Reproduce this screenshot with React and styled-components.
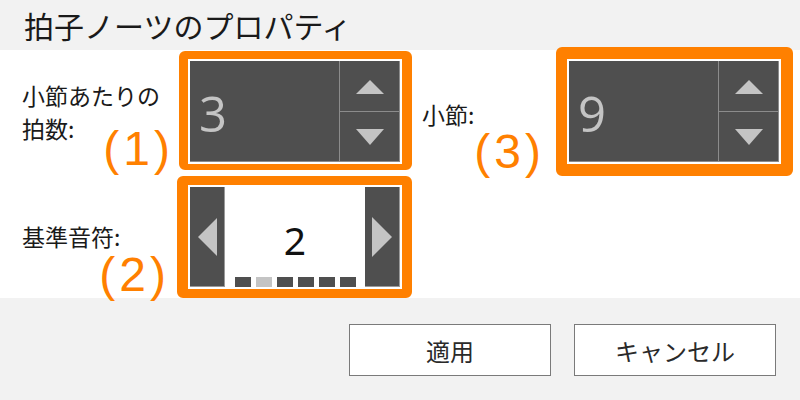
import React from 'react';
import styled, { createGlobalStyle } from 'styled-components';

const GlobalStyle = createGlobalStyle`
  html, body {
    margin: 0;
    padding: 0;
    background: #f2f2f2;
  }
  body {
    font-family: "Noto Sans CJK JP", "Noto Sans", sans-serif;
    color: #1a1a1a;
  }
`

const Dialog = styled.div`
  width: 800px;
  height: 400px;
  display: flex;
  flex-direction: column;
  background: #f2f2f2;
  overflow: hidden;
`

const Header = styled.div`
  height: 50px;
  box-sizing: border-box;
  padding-left: 24px;
  font-size: 30px;
  line-height: 50px;
  color: #1a1a1a;
`

const Content = styled.div`
  height: 248px;
  background: #fff;
  display: grid;
  grid-template-columns: 177px 235px 144px 237px;
  grid-template-rows: 126px 122px;
`

const Cell = styled.div`
  display: flex;
  flex-direction: column;
  padding: ${p => p.$pad};
`

const Label = styled.div`
  font-size: 23px;
  line-height: 33px;
  color: #1a1a1a;
`

const Annot = styled.div`
  align-self: flex-end;
  margin-top: ${p => p.$top || 0}px;
  font-family: "Liberation Sans", Arial, sans-serif;
  font-size: 48px;
  line-height: 48px;
  letter-spacing: 4px;
  color: #ff8000;
`

const Frame = styled.div`
  align-self: start;
  justify-self: start;
  margin: ${p => p.$margin || 0};
  border-style: solid;
  border-color: #ff8000;
  border-width: ${p => p.$bw};
  border-radius: 6px;
  padding: 2px;
  background: #fff;
`

const Spinner = styled.div`
  width: 210px;
  height: 101px;
  box-sizing: border-box;
  display: grid;
  grid-template-columns: 149px 1fr;
  background: #4f4f4f;
  border-right: 1px solid #8c8c8c;
  border-bottom: 1px solid #8c8c8c;
`

const Value = styled.div`
  font-family: "Open Sans", "Noto Sans", sans-serif;
  font-weight: 500;
  font-size: 49px;
  line-height: 1;
  color: #c4c4c4;
  padding: 28px 0 0 9px;
`

const Steps = styled.div`
  display: grid;
  grid-template-rows: 50px 1fr;
  border-left: 1px solid #8c8c8c;
`

const Step = styled.div`
  display: flex;
  align-items: center;
  justify-content: center;
  padding-top: ${p => (p.$up ? 2 : 0)}px;
  border-top: ${p => (p.$up ? 'none' : '1px solid #8c8c8c')};
`

const Picker = styled.div`
  width: 210px;
  height: 100px;
  display: grid;
  grid-template-columns: 35px 1fr 35px;
`

const Side = styled.div`
  box-sizing: border-box;
  display: flex;
  align-items: center;
  justify-content: center;
  background: #4f4f4f;
  border-right: 1px solid #9a9a9a;
  border-bottom: 1px solid #9a9a9a;
`

const Middle = styled.div`
  display: flex;
  flex-direction: column;
  align-items: center;
`

const Number = styled.div`
  font-family: "Noto Sans", sans-serif;
  font-size: 39px;
  line-height: 1;
  color: #111;
  margin-top: 33px;
  flex: 1;
`

const Dots = styled.div`
  display: flex;
  gap: 5px;
`

const Dot = styled.div`
  width: 16px;
  height: 10px;
  background: ${p => (p.$on ? '#c4c4c4' : '#4f4f4f')};
`

const Footer = styled.div`
  flex: 1;
  display: flex;
  justify-content: flex-end;
  align-items: flex-start;
  gap: 23px;
  padding: 26px 24px 0 0;
`

const Button = styled.button`
  width: 202px;
  height: 52px;
  border: 1px solid #7a7a7a;
  background: #fff;
  font-family: "Noto Sans CJK JP", sans-serif;
  font-size: 24px;
  color: #2a2a2a;
  padding: 0;
  cursor: pointer;
`

const Tri = ({ dir }) => {
  const pts = {
    up: '0,14 14,0 28,14',
    down: '0,0 28,0 14,16',
    left: '0,19 19,0 19,38',
    right: '0,0 20,20 0,40',
  }[dir];
  const size = {
    up: [28, 14],
    down: [28, 16],
    left: [19, 38],
    right: [20, 40],
  }[dir];
  return (
    <svg width={size[0]} height={size[1]} viewBox={`0 0 ${size[0]} ${size[1]}`}>
      <polygon points={pts} fill="#c4c4c4" />
    </svg>
  );
};

const NumberSpinner = ({ value }) => (
  <Spinner>
    <Value>{value}</Value>
    <Steps>
      <Step $up><Tri dir="up" /></Step>
      <Step><Tri dir="down" /></Step>
    </Steps>
  </Spinner>
);

export default function App() {
  const dots = [false, true, false, false, false, false];

  return (
    <Dialog>
      <GlobalStyle />
      <Header>拍子ノーツのプロパティ</Header>
      <Content>
        <Cell $pad="29px 3px 0 22px">
          <Label>小節あたりの<br />拍数:</Label>
          <Annot $top={-20}>(1)</Annot>
        </Cell>
        <Frame $margin="1px 0 0 2px" $bw="8px 10px 6px 9px">
          <NumberSpinner value="3" />
        </Frame>
        <Cell $pad="48px 11px 0 10px">
          <Label>小節:</Label>
          <Annot $top={-3}>(3)</Annot>
        </Cell>
        <Frame $margin="-3px 0 0 0" $bw="12px 12px 12px 11px">
          <NumberSpinner value="9" />
        </Frame>

        <Cell $pad="44px 7px 0 22px">
          <Label>基準音符:</Label>
          <Annot $top={-2}>(2)</Annot>
        </Cell>
        <Frame $bw="9px 10px 9px 11px">
          <Picker>
            <Side><Tri dir="left" /></Side>
            <Middle>
              <Number>2</Number>
              <Dots>
                {dots.map((on, i) => <Dot key={i} $on={on} />)}
              </Dots>
            </Middle>
            <Side><Tri dir="right" /></Side>
          </Picker>
        </Frame>
      </Content>
      <Footer>
        <Button>適用</Button>
        <Button>キャンセル</Button>
      </Footer>
    </Dialog>
  );
}
